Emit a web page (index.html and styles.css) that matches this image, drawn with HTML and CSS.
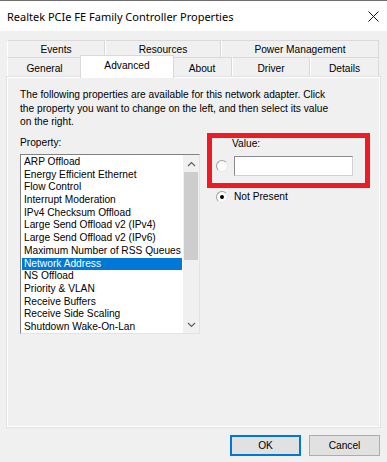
FILE: index.html
```html
<!DOCTYPE html>
<html lang="en">
<head>
  <meta charset="UTF-8">
  <title>Realtek PCIe FE Family Controller Properties</title>
  <link rel="stylesheet" href="styles.css">
</head>
<body>
  <div class="window">
    <!-- Title bar -->
    <div class="titlebar">
      <div class="titlebar-text">Realtek PCIe FE Family Controller Properties</div>
      <button class="titlebar-close">
        <svg width="11" height="11" viewBox="0 0 11 11"><path d="M0.5 0.5L10.5 10.5M10.5 0.5L0.5 10.5" stroke="#111" stroke-width="1"/></svg>
      </button>
    </div>

    <div class="dialog">
      <!-- Tabs (two rows) -->
      <div class="tabs">
        <div class="tab-row tab-row-back">
          <div class="tab">Events</div>
          <div class="tab">Resources</div>
          <div class="tab">Power Management</div>
        </div>
        <div class="tab-row tab-row-front">
          <div class="tab">General</div>
          <div class="tab tab-active">Advanced</div>
          <div class="tab">About</div>
          <div class="tab">Driver</div>
          <div class="tab">Details</div>
        </div>
      </div>

      <!-- Advanced page -->
      <div class="panel">
        <p class="intro">The following properties are available for this network adapter. Click<br>the property you want to change on the left, and then select its value<br>on the right.</p>

        <div class="columns">
          <div class="property-col">
            <div class="field-label">Property:</div>
            <div class="listbox">
              <ul class="list-items">
                <li>ARP Offload</li>
                <li>Energy Efficient Ethernet</li>
                <li>Flow Control</li>
                <li>Interrupt Moderation</li>
                <li>IPv4 Checksum Offload</li>
                <li>Large Send Offload v2 (IPv4)</li>
                <li>Large Send Offload v2 (IPv6)</li>
                <li>Maximum Number of RSS Queues</li>
                <li class="selected">Network Address</li>
                <li>NS Offload</li>
                <li>Priority &amp; VLAN</li>
                <li>Receive Buffers</li>
                <li>Receive Side Scaling</li>
                <li>Shutdown Wake-On-Lan</li>
              </ul>
              <div class="scrollbar">
                <div class="scroll-btn">
                  <svg width="9" height="6" viewBox="0 0 9 6"><path d="M1 5L4.5 1.5L8 5" fill="none" stroke="#606060" stroke-width="1.2"/></svg>
                </div>
                <div class="scroll-track"><div class="scroll-thumb"></div></div>
                <div class="scroll-btn">
                  <svg width="9" height="6" viewBox="0 0 9 6"><path d="M1 1L4.5 4.5L8 1" fill="none" stroke="#606060" stroke-width="1.2"/></svg>
                </div>
              </div>
            </div>
          </div>

          <div class="value-col">
            <div class="field-label value-label">Value:</div>
            <div class="value-row">
              <span class="radio"></span>
              <div class="textbox"></div>
            </div>
            <div class="value-row not-present">
              <span class="radio radio-checked"></span>
              <span>Not Present</span>
            </div>
            <!-- red annotation frame -->
            <div class="highlight-box"></div>
          </div>
        </div>
      </div>

      <div class="buttons">
        <button class="btn btn-default">OK</button>
        <button class="btn">Cancel</button>
      </div>
    </div>
  </div>
</body>
</html>
```

FILE: styles.css
```css
body {
  margin: 0;
  width: 387px;
  height: 462px;
  overflow: hidden;
  background-color: #f0f0f0;
  font-family: "Liberation Sans", Arial, sans-serif;
  font-size: 10.2px;
  color: #000;
}

.window {
  display: flex;
  flex-direction: column;
  height: 462px;
  border-top: 1px solid #6e6e6e;
  box-sizing: border-box;
}

/* Title bar */
.titlebar {
  display: flex;
  justify-content: space-between;
  align-items: center;
  height: 30px;
  padding: 0 8px 0 7px;
  background-color: #fff;
}

.titlebar-text {
  font-family: "Noto Sans", "Open Sans", sans-serif;
  font-size: 11px;
  color: #000;
}

.titlebar-close {
  background: none;
  border: none;
  padding: 0;
  width: 11px;
  height: 11px;
  display: flex;
}

.dialog {
  flex: 1;
  display: flex;
  flex-direction: column;
  padding: 9px 7px 6px 7px;
}

/* Tabs */
.tabs {
  display: flex;
  flex-direction: column;
}

.tab-row {
  display: grid;
  margin-right: 1px;
}

.tab-row-back {
  grid-template-columns: 98px 116px 1fr;
  height: 17px;
}

.tab-row-front {
  grid-template-columns: 75px 90px 60px 78px 1fr;
  height: 20px;
}

.tab {
  display: flex;
  align-items: center;
  justify-content: center;
  background-color: #f0f0f0;
  border: 1px solid #d9d9d9;
  border-left-color: #fff;
  border-bottom: none;
  box-sizing: border-box;
  white-space: nowrap;
}

.tab-row-front .tab {
  padding-top: 1px;
}

.tab-active {
  position: relative;
  z-index: 1;
  margin: -2px -2px -1px -2px;
  padding-bottom: 4px;
  background-color: #fff;
  border-color: #d9d9d9;
}

.tab-row-front .tab-active {
  padding-top: 0;
}

/* Page */
.panel {
  height: 350px;
  box-sizing: border-box;
  padding: 10px 12px 0 12px;
  border: 1px solid #fff;
  box-shadow: 0 0 0 1px #e2e2e2;
  background-color: #f0f0f0;
}

.intro {
  margin: 0;
  line-height: 13.5px;
}

.columns {
  display: flex;
  gap: 16px;
  margin-top: 7.5px;
}

.field-label {
  line-height: 13px;
  height: 13px;
}

.property-col {
  display: flex;
  flex-direction: column;
  gap: 5px;
}

.listbox {
  display: flex;
  width: 180px;
  height: 180px;
  box-sizing: border-box;
  border: 1px solid #e3e3e3;
  border-top-color: #828282;
  border-left-color: #828282;
  background-color: #fff;
  overflow: hidden;
}

.list-items {
  flex: 1;
  list-style: none;
  margin: 0;
  padding: 1px 1px 0 1px;
}

.list-items li {
  line-height: 12.7px;
  height: 12.7px;
  padding-left: 2px;
  white-space: nowrap;
}

.list-items li.selected {
  background-color: #0078d7;
  color: #fff;
}

.scrollbar {
  width: 16px;
  display: flex;
  flex-direction: column;
  background-color: #f0f0f0;
}

.scroll-btn {
  height: 17px;
  display: flex;
  align-items: center;
  justify-content: center;
}

.scroll-track {
  flex: 1;
  padding: 0 1px;
}

.scroll-thumb {
  height: 88px;
  background-color: #cdcdcd;
}

/* Value side */
.value-col {
  position: relative;
  display: flex;
  flex-direction: column;
}

.value-label {
  padding-left: 16px;
  padding-top: 1px;
}

.value-row {
  display: flex;
  align-items: center;
  gap: 6px;
  margin-top: 6px;
}

.not-present {
  margin-top: 14px;
  line-height: 13px;
}

.radio {
  width: 10px;
  height: 10px;
  border-radius: 50%;
  border: 1px solid #a0a0a0;
  border-right-color: #e8e8e8;
  border-bottom-color: #e8e8e8;
  background-color: #fdfdfd;
  position: relative;
  box-sizing: content-box;
}

.radio-checked::after {
  content: "";
  position: absolute;
  left: 3px;
  top: 3px;
  width: 4px;
  height: 4px;
  border-radius: 50%;
  background-color: #000;
}

.textbox {
  width: 119px;
  height: 20px;
  box-sizing: border-box;
  border: 1px solid #d0d0d0;
  border-top-color: #8a8a8a;
  border-left-color: #8a8a8a;
  background-color: #fff;
}

.highlight-box {
  position: absolute;
  left: -9px;
  top: -3px;
  width: 163px;
  height: 55px;
  box-sizing: border-box;
  border: 5px solid #ed1c24;
}

/* Buttons */
.buttons {
  display: flex;
  justify-content: flex-end;
  gap: 8px;
  margin-top: 8px;
}

.btn {
  width: 71px;
  height: 21px;
  padding: 0;
  font-family: "Liberation Sans", Arial, sans-serif;
  font-size: 10.2px;
  color: #000;
  background-color: #e1e1e1;
  border: 1px solid #adadad;
}

.btn-default {
  border: 2px solid #0078d7;
}
```
